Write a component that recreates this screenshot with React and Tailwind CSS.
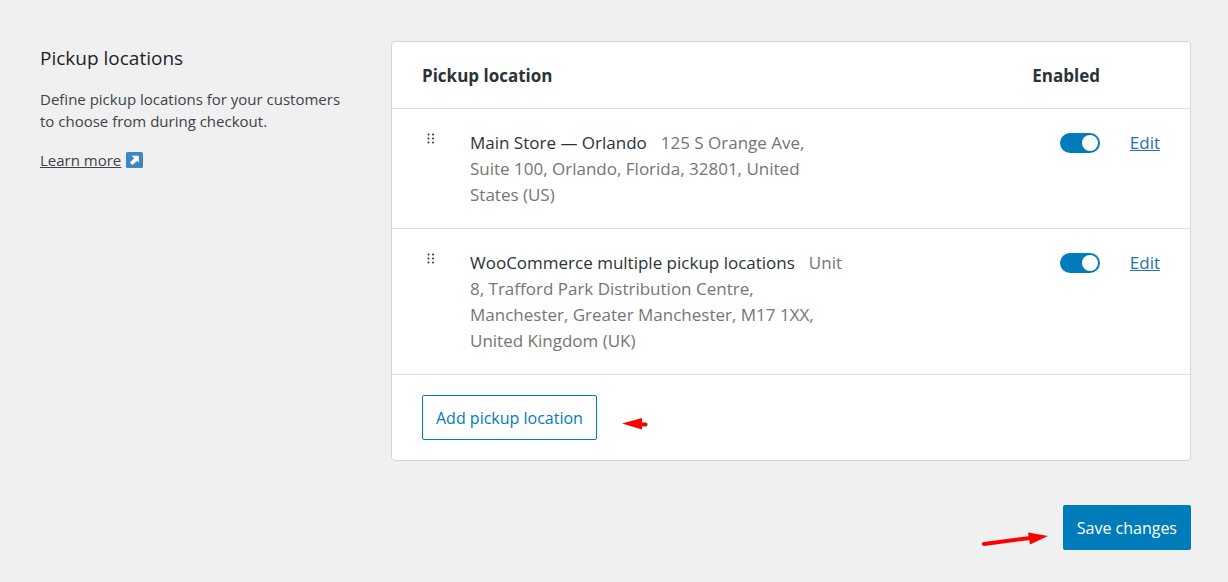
import React, { useState } from 'react';

const LOCATIONS = [
  {
    id: 'orlando',
    name: 'Main Store — Orlando',
    address: '125 S Orange Ave, Suite 100, Orlando, Florida, 32801, United States (US)',
  },
  {
    id: 'manchester',
    name: 'WooCommerce multiple pickup locations',
    address: 'Unit 8, Trafford Park Distribution Centre, Manchester, Greater Manchester, M17 1XX, United Kingdom (UK)',
  },
];

function ExternalIcon() {
  return (
    <svg width={17} height={16} viewBox="0 0 17 16" aria-hidden="true">
      <rect width={17} height={16} rx={1.5} fill="#3c87c4" />
      <path d="M5.6 3.8H12.8v6.8l-1.8-1.6-4.7 3.9-2.5-2.3 4.4-4.3z" fill="#fff" />
    </svg>
  );
}

function DragHandle() {
  return (
    <svg width={9} height={12} viewBox="0 0 9 12" fill="#1e1e1e" aria-hidden="true">
      {[1.5, 5.5, 9.5].map(y => (
        <g key={y}>
          <circle cx={2.5} cy={y} r={0.9} />
          <circle cx={7} cy={y} r={0.9} />
        </g>
      ))}
    </svg>
  );
}

function LocationRow({ location }) {
  const [enabled, setEnabled] = useState(true);

  return (
    <tr className="border-t border-[#e0e0e0] align-top">
      <td className="pt-6 pl-[34px]">
        <DragHandle />
      </td>
      <td className="pt-[21px] pr-6 pb-5 leading-[26px]">
        <span className="text-[#2c3338]">{location.name}</span>
        <span className="ml-3.5 text-[#757575]">{location.address}</span>
      </td>
      <td className="pt-6 text-right">
        <input
          type="checkbox"
          role="switch"
          aria-label={`Enable ${location.name}`}
          checked={enabled}
          onChange={e => setEnabled(e.target.checked)}
          className="block ml-auto h-5 w-10 cursor-pointer appearance-none rounded-full bg-[#8c8f94] p-0.5 before:block before:h-4 before:w-4 before:rounded-full before:bg-white checked:bg-[#007cba] checked:before:ml-5"
        />
      </td>
      <td className="pt-[21px] pr-[30px] text-right leading-[26px]">
        <a href="#edit" className="text-[#2271b1] underline">Edit</a>
      </td>
    </tr>
  );
}

export default function App() {
  return (
    <main className="min-h-screen bg-[#f0f0f0] pt-[41px] pr-[37px] pb-8 pl-10 font-['Open_Sans',sans-serif]">
      <div className="flex items-start">
        {/* Section intro */}
        <section className="w-[351px] shrink-0 pt-1 text-[15px] leading-[22px] text-[#3c434a]">
          <h2 className="text-[19px] leading-[26px] text-[#1d2327]">Pickup locations</h2>
          <p className="mt-[17px] w-[308px]">Define pickup locations for your customers to choose from during checkout.</p>
          <p className="mt-[17px] flex items-center gap-[5px]">
            <a href="#learn-more" className="underline">Learn more</a>
            <ExternalIcon />
          </p>
        </section>

        {/* Locations card */}
        <section className="min-w-0 flex-1 rounded border border-[#d5d5d5] bg-white">
          <table className="w-full table-fixed text-[17px]">
            <colgroup>
              <col className="w-[78px]" />
              <col />
              <col className="w-[230px]" />
              <col className="w-[90px]" />
            </colgroup>
            <thead>
              <tr className="h-[66px] text-[#2c3338]">
                <th colSpan={2} className="pt-0.5 pl-[30px] text-left font-bold">Pickup location</th>
                <th className="pt-0.5 text-right font-bold">Enabled</th>
                <td />
              </tr>
            </thead>
            <tbody>
              {LOCATIONS.map(location => <LocationRow key={location.id} location={location} />)}
            </tbody>
          </table>
          <div className="flex items-center gap-[25px] border-t border-[#e0e0e0] px-[30px] py-5">
            <button type="button" className="h-[45px] rounded-xs border border-[#007cba] px-[13px] pt-0.5 text-base text-[#007cba]">
              Add pickup location
            </button>
            <svg width={26} height={14} viewBox="0 0 26 14" className="mt-3.5" aria-hidden="true">
              <path d="M0 6.5 20 1v11.5z" fill="#f00" />
              <path d="M18 7.5h5.5" stroke="#f00" strokeWidth={4} strokeLinecap="round" />
            </svg>
          </div>
        </section>
      </div>

      <div className="mt-11 flex items-center justify-end gap-[15px]">
        <svg width={66} height={16} viewBox="0 0 66 16" className="mt-6" aria-hidden="true">
          <path d="M2 13 52 6.5" stroke="#f00" strokeWidth={4} strokeLinecap="round" />
          <path d="M66 5 46 1.5 48 13.5z" fill="#f00" />
        </svg>
        <button type="submit" className="h-[45px] rounded-xs bg-[#007cba] px-[14px] pt-0.5 text-base text-white">
          Save changes
        </button>
      </div>
    </main>
  );
}
